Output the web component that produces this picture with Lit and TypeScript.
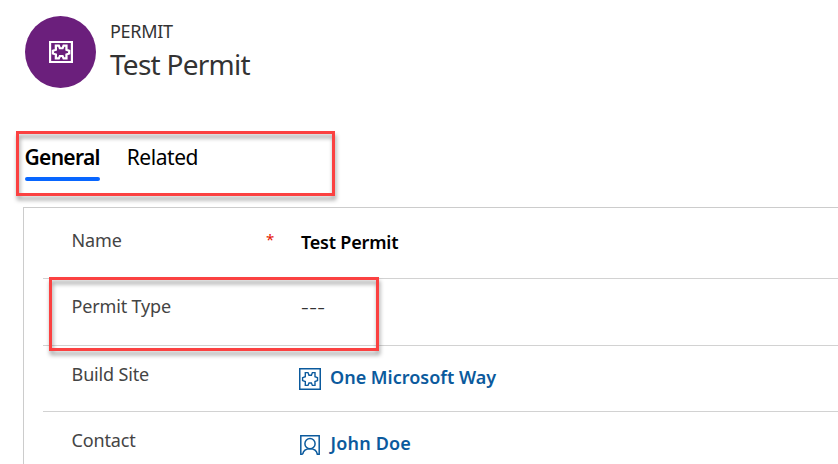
import { LitElement, html, css, svg } from "lit";
import { customElement } from "lit/decorators.js";

const puzzle = (w: number, frame: number) => svg`
  <rect x=${frame / 2} y=${frame / 2} width=${22 - frame} height=${22 - frame} stroke-width=${frame}/>
  <path stroke-width=${w} d="M6.3 4.6H9L10 7.3H12.4L13.4 4.6H16V8.7L18.5 9.7V12.6L16 13.5V17.4H13.4L12.4 15H10L9 17.4H6.3V13.5L3.6 12.6V9.7L6.3 8.7Z"/>`;

@customElement("app-root")
export class AppRoot extends LitElement {
  static styles = css`
    :host { display: block; position: relative; width: 838px; height: 464px; overflow: hidden; background: #fff; font-family: "Noto Sans", "Open Sans", sans-serif; font-size: 18px; line-height: 24px; color: #333; white-space: nowrap; }
    svg { display: block; fill: none; stroke: currentColor; }
    header { display: flex; box-sizing: border-box; height: 143px; padding: 16px 0 0 25px; }
    .avatar { width: 71px; height: 72px; border-radius: 50%; background: #6b1f7c; color: #fff; display: grid; place-items: center; flex: none; }
    .titles { padding: 3px 0 0 14px; }
    .kind { letter-spacing: -0.3px; }
    .title { margin-top: 3px; font-size: 28px; line-height: 36px; letter-spacing: -0.75px; }
    .tabs { display: flex; gap: 27px; height: 64px; padding-left: 25px; font-size: 21px; line-height: 28px; color: #000; }
    .tab { height: 38px; box-sizing: border-box; width: 75px; }
    .active { font-weight: 600; letter-spacing: -0.7px; text-indent: -0.5px; }
    .active::after { content: ""; display: block; height: 4px; margin-top: 6px; border-radius: 2px; background: #0866ff; }
    .related { letter-spacing: -0.45px; text-indent: -0.3px; }
    .form { margin-left: 23px; border: 1px solid #ccc; border-width: 1px 0 0 1px; padding-left: 19px; height: 260px; }
    .row { display: flex; box-sizing: border-box; height: 67px; padding: 15px 0 0 29px; border-bottom: 1px solid #d2d2d2; color: #444; }
    .row.first { height: 71px; padding-top: 20px; }
    .row.third { height: 66px; padding-top: 16px; }
    .row.last { padding-top: 16px; }
    .label { width: 194px; letter-spacing: -0.17px; text-indent: -0.4px; }
    .req { width: 35px; color: #e51400; font-size: 15px; line-height: 22px; }
    .value { display: flex; padding-top: 2px; color: #000; font-weight: 600; }
    .v1 { letter-spacing: -0.2px; }
    .v4 { letter-spacing: 0.18px; }
    .link { color: #0b5a9d; padding-top: 3px; }
    .empty { font-size: 24px; line-height: 20px; font-weight: 300; color: #333; letter-spacing: 0.4px; }
    .ico { width: 31px; margin-left: -2px; padding-top: 3px; }
    .ico.person { padding: 4px 0 0 1px; width: 30.5px; }
    .mark { position: absolute; box-sizing: border-box; border: 3px solid #fb4141; filter: drop-shadow(1px 4px 2px rgba(0,0,0,.38)); }
    .m1 { left: 16px; top: 131px; width: 319px; height: 65px; }
    .m2 { left: 49px; top: 277px; width: 330px; height: 74px; }
  `;

  render() {
    return html`
      <header>
        <div class="avatar"><svg width="24" height="22" viewBox="0 0 22 22" preserveAspectRatio="none">${puzzle(2.1, 2)}</svg></div>
        <div class="titles">
          <div class="kind">PERMIT</div>
          <div class="title">Test Permit</div>
        </div>
      </header>
      <nav class="tabs"><div class="tab active">General</div><div class="tab related">Related</div></nav>
      <section class="form">
        <div class="row first"><div class="label">Name</div><div class="req">*</div><div class="value v1">Test Permit</div></div>
        <div class="row"><div class="label">Permit Type</div><div class="req"></div><div class="value empty">---</div></div>
        <div class="row third"><div class="label">Build Site</div><div class="req"></div>
          <div class="value link"><span class="ico"><svg width="22" height="22" viewBox="0 0 22 22">${puzzle(1.4, 1.5)}</svg></span>One Microsoft Way</div></div>
        <div class="row last"><div class="label">Contact</div><div class="req"></div>
          <div class="value link v4"><span class="ico person"><svg width="20" height="20" viewBox="0 0 20 20" stroke-width="1.5"><path d="M2.7 19.2H.8V.8H19.2V19.2H17.3C16.8 16 14.5 13.8 10 13.8S3.2 16 2.7 19.2"/><circle cx="10" cy="8.7" r="5.1"/></svg></span>John Doe</div></div>
      </section>
      <div class="mark m1"></div>
      <div class="mark m2"></div>`;
  }
}
